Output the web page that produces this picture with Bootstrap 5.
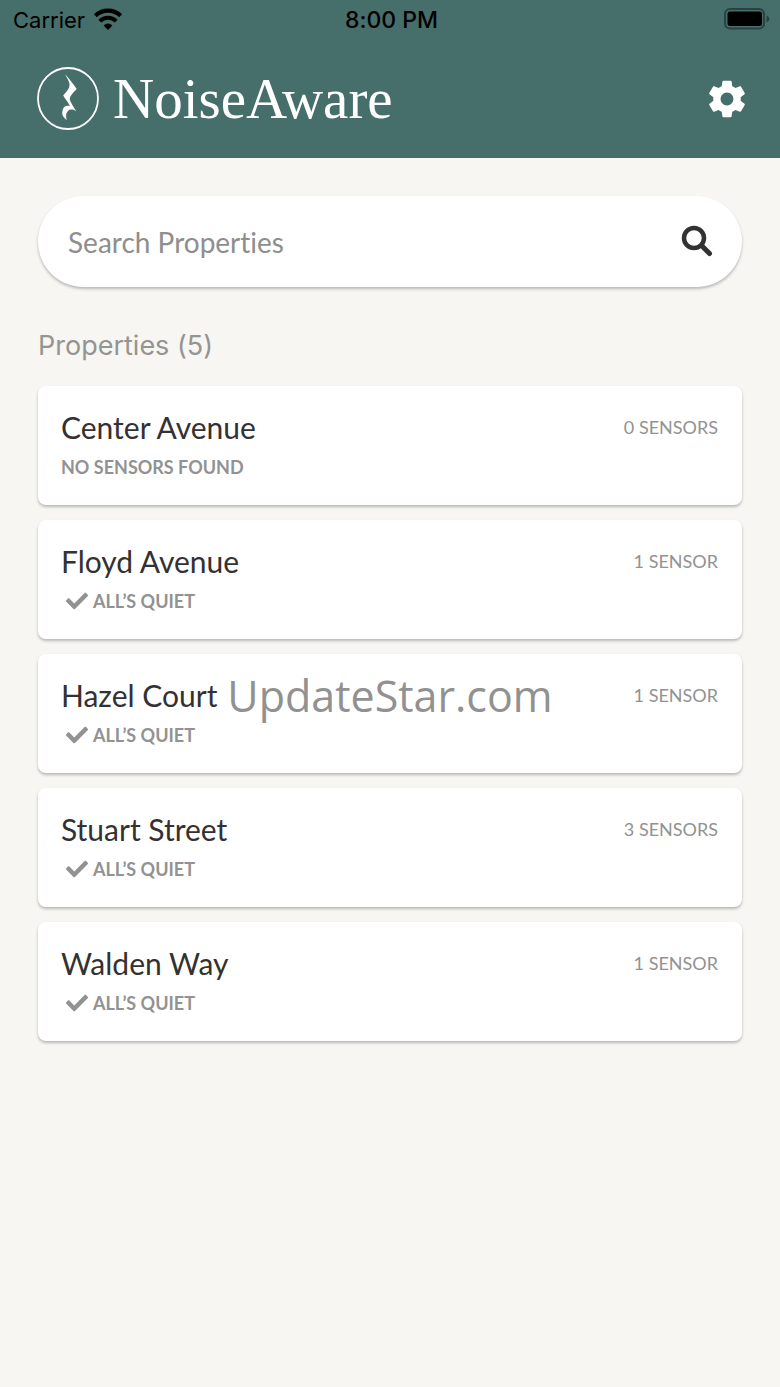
<!DOCTYPE html>
<html lang="en">
<head>
<meta charset="utf-8">
<meta name="viewport" content="width=device-width, initial-scale=1">
<title>NoiseAware</title>
<link href="https://cdn.jsdelivr.net/npm/bootstrap@5.3.0/dist/css/bootstrap.min.css" rel="stylesheet">
<style>
  body { background: #f7f6f3; font-family: Lato, sans-serif; font-variant-ligatures: none; color: #333132; }
  .app-header { background: #466e6b; height: 158px; }
  .status-bar { height: 40px; padding: 0 10px 0 13px; font-family: Inter, sans-serif; font-size: 22px; line-height: 40px; color: #000; }
  .status-bar > * { flex: 1 1 0; }
  .clock { font-size: 23px; font-weight: 500; }
  .brand-row { height: 118px; padding: 0 31px 0 37px; }
  .brand { gap: 14px; color: #fff; font-family: "Liberation Serif", serif; font-size: 57px; line-height: 64px; }
  .gutter { padding: 38px 38px 0; }
  .raised { background: #fff; box-shadow: 0 2px 3px rgba(0, 0, 0, .25); }
  .search-box { height: 91px; padding: 0 24px 0 30px; }
  .search-box .form-control { height: 60px; font-size: 28px; line-height: 60px; font-variant-ligatures: none; color: #333132; }
  .search-box .form-control::placeholder { color: #8e8e8e; opacity: 1; }
  .list-heading { margin: 39px 0 20px; font-family: Inter, sans-serif; font-size: 27px; line-height: 40px; color: #949490; }
  .property-list { gap: 15px; }
  .property { height: 119px; border-radius: 8px; padding: 21px 24px 0 23px; }
  .property-name { font-size: 30px; line-height: 40px; }
  .property-state { font-size: 18px; line-height: 40px; font-weight: 700; color: #929292; }
  .property-state svg { margin: 0 5px; }
  .sensor-count { font-size: 18px; line-height: 40px; color: #929292; }
  .watermark { padding-top: 4px; font-family: "Open Sans", sans-serif; font-weight: 400; font-size: 43px; line-height: 56px; color: #919191; pointer-events: none; }
</style>
</head>
<body class="position-relative min-vh-100">
<header class="app-header">
  <div class="status-bar d-flex align-items-center">
    <div class="d-flex align-items-center gap-2">
      <span>Carrier</span>
      <svg width="30" height="24" viewBox="0 0 30 24" fill="none" stroke="#000" aria-hidden="true">
        <path d="M2.300 7.800A18 18 0 0 1 27.700 7.800" stroke-width="4.200"/>
        <path d="M6.800 13.200A11.600 11.600 0 0 1 23.200 13.200" stroke-width="4"/>
        <path d="M15 22L10.600 17.500Q15 13.700 19.400 17.500Z" fill="#000" stroke="none"/>
      </svg>
    </div>
    <div class="clock text-center">8:00 PM</div>
    <div class="d-flex justify-content-end">
      <svg width="46" height="24" viewBox="0 0 46 24" aria-hidden="true">
        <rect x="1" y="1" width="39" height="19.500" rx="5" fill="none" stroke="#284341" stroke-width="2"/>
        <rect x="3.500" y="3.500" width="34.500" height="14.500" rx="2.500"/>
        <path d="M42.500 7.500q3 1.300 3 3.500t-3 3.500z" fill="#284341"/>
      </svg>
    </div>
  </div>
  <div class="brand-row d-flex align-items-center justify-content-between">
    <a href="#" class="brand d-flex align-items-center text-decoration-none">
      <svg width="62" height="64" viewBox="0 0 62 64" fill="#fff" aria-hidden="true">
        <ellipse cx="31" cy="31.500" rx="30" ry="30.500" fill="none" stroke="#fff" stroke-width="1.800"/>
        <path d="M28 7C31 10.500 35.500 15.500 39.700 22C36 26 32.500 29 32.800 32.500C33.500 35.500 36.500 39.500 39.300 44.500C36.500 42 33 42 31 44C28.500 46.500 29 49.500 29.700 53C26.500 50.500 24.500 48 25.500 44C25.900 39.500 29.500 38 33 39C31 35.500 28 31.500 26.200 28.500C29.500 24.500 33 21.500 32.500 17C32 13.500 29.500 10.500 28 7Z"/>
      </svg>
      <span>NoiseAware</span>
    </a>
    <button type="button" class="btn border-0 p-0 d-flex" aria-label="Settings">
      <svg width="44" height="44" viewBox="0 0 24 24" fill="#fff" aria-hidden="true"><path d="M19.430 12.980c.04-.32.07-.64.07-.98s-.03-.66-.07-.98l2.110-1.650c.19-.15.24-.42.12-.64l-2-3.460c-.12-.22-.39-.3-.61-.22l-2.490 1c-.52-.4-1.080-.73-1.690-.98l-.38-2.650C14.460 2.180 14.250 2 14 2h-4c-.25 0-.46.18-.49.42l-.38 2.650c-.61.25-1.170.59-1.690.98l-2.490-1c-.23-.09-.49 0-.61.22l-2 3.460c-.13.22-.07.49.12.64l2.110 1.650c-.04.32-.07.65-.07.98s.03.66.07.98l-2.110 1.650c-.19.15-.24.42-.12.64l2 3.460c.12.22.39.3.61.22l2.490-1c.52.4 1.080.73 1.690.98l.38 2.650c.03.24.24.42.49.42h4c.25 0 .46-.18.49-.42l.38-2.650c.61-.25 1.170-.59 1.690-.98l2.490 1c.23.09.49 0 .61-.22l2-3.460c.12-.22.07-.49-.12-.64l-2.110-1.650zM12 15.500c-1.930 0-3.500-1.570-3.500-3.500s1.570-3.500 3.500-3.500 3.500 1.570 3.500 3.500-1.570 3.500-3.500 3.500z"/></svg>
    </button>
  </div>
</header>

<main class="gutter">
  <form class="search-box raised rounded-pill d-flex align-items-center" role="search">
    <label for="property-search" class="visually-hidden">Search Properties</label>
    <input id="property-search" type="text" class="form-control border-0 bg-transparent shadow-none p-0" placeholder="Search Properties">
    <button type="button" class="btn border-0 p-0 d-flex" aria-label="Search">
      <svg width="42" height="38" viewBox="0 0 42 38" fill="none" stroke="#333132" aria-hidden="true">
        <circle cx="18" cy="15" r="10" stroke-width="4.500"/>
        <path d="M25.500 22.500L33.500 30.500" stroke-width="5" stroke-linecap="round"/>
      </svg>
    </button>
  </form>

  <h1 class="list-heading fw-normal">Properties (5)</h1>

  <ul class="property-list list-unstyled d-flex flex-column mb-0">
    <li class="property raised d-flex justify-content-between">
      <div>
        <h2 class="property-name fw-normal mb-0">Center Avenue</h2>
        <div class="property-state">NO SENSORS FOUND</div>
      </div>
      <span class="sensor-count">0 SENSORS</span>
    </li>
    <li class="property raised d-flex justify-content-between">
      <div>
        <h2 class="property-name fw-normal mb-0">Floyd Avenue</h2>
        <div class="property-state d-flex align-items-center"><svg width="22" height="22" viewBox="0 0 512 512" fill="currentColor" aria-hidden="true"><path d="M173.900 439.400l-166.400-166.400c-10-10-10-26.200 0-36.200l36.200-36.200c10-10 26.200-10 36.200 0L192 312.700 432.100 72.600c10-10 26.200-10 36.200 0l36.200 36.200c10 10 10 26.200 0 36.200l-294.400 294.400c-10 10-26.200 10-36.200 0z"/></svg>ALL’S QUIET</div>
      </div>
      <span class="sensor-count">1 SENSOR</span>
    </li>
    <li class="property raised d-flex justify-content-between">
      <div>
        <h2 class="property-name fw-normal mb-0">Hazel Court</h2>
        <div class="property-state d-flex align-items-center"><svg width="22" height="22" viewBox="0 0 512 512" fill="currentColor" aria-hidden="true"><path d="M173.900 439.400l-166.400-166.400c-10-10-10-26.200 0-36.200l36.200-36.200c10-10 26.200-10 36.200 0L192 312.700 432.100 72.600c10-10 26.200-10 36.200 0l36.200 36.200c10 10 10 26.200 0 36.200l-294.400 294.400c-10 10-26.200 10-36.200 0z"/></svg>ALL’S QUIET</div>
      </div>
      <span class="sensor-count">1 SENSOR</span>
    </li>
    <li class="property raised d-flex justify-content-between">
      <div>
        <h2 class="property-name fw-normal mb-0">Stuart Street</h2>
        <div class="property-state d-flex align-items-center"><svg width="22" height="22" viewBox="0 0 512 512" fill="currentColor" aria-hidden="true"><path d="M173.900 439.400l-166.400-166.400c-10-10-10-26.200 0-36.200l36.200-36.200c10-10 26.200-10 36.200 0L192 312.700 432.100 72.600c10-10 26.200-10 36.200 0l36.200 36.200c10 10 10 26.200 0 36.200l-294.400 294.400c-10 10-26.200 10-36.200 0z"/></svg>ALL’S QUIET</div>
      </div>
      <span class="sensor-count">3 SENSORS</span>
    </li>
    <li class="property raised d-flex justify-content-between">
      <div>
        <h2 class="property-name fw-normal mb-0">Walden Way</h2>
        <div class="property-state d-flex align-items-center"><svg width="22" height="22" viewBox="0 0 512 512" fill="currentColor" aria-hidden="true"><path d="M173.900 439.400l-166.400-166.400c-10-10-10-26.200 0-36.200l36.200-36.200c10-10 26.200-10 36.200 0L192 312.700 432.100 72.600c10-10 26.200-10 36.200 0l36.200 36.200c10 10 10 26.200 0 36.200l-294.400 294.400c-10 10-26.200 10-36.200 0z"/></svg>ALL’S QUIET</div>
      </div>
      <span class="sensor-count">1 SENSOR</span>
    </li>
  </ul>
</main>

<div class="watermark position-absolute top-50 start-50 translate-middle">UpdateStar.com</div>
<script src="https://cdn.jsdelivr.net/npm/bootstrap@5.3.0/dist/js/bootstrap.bundle.min.js"></script>
</body>
</html>
